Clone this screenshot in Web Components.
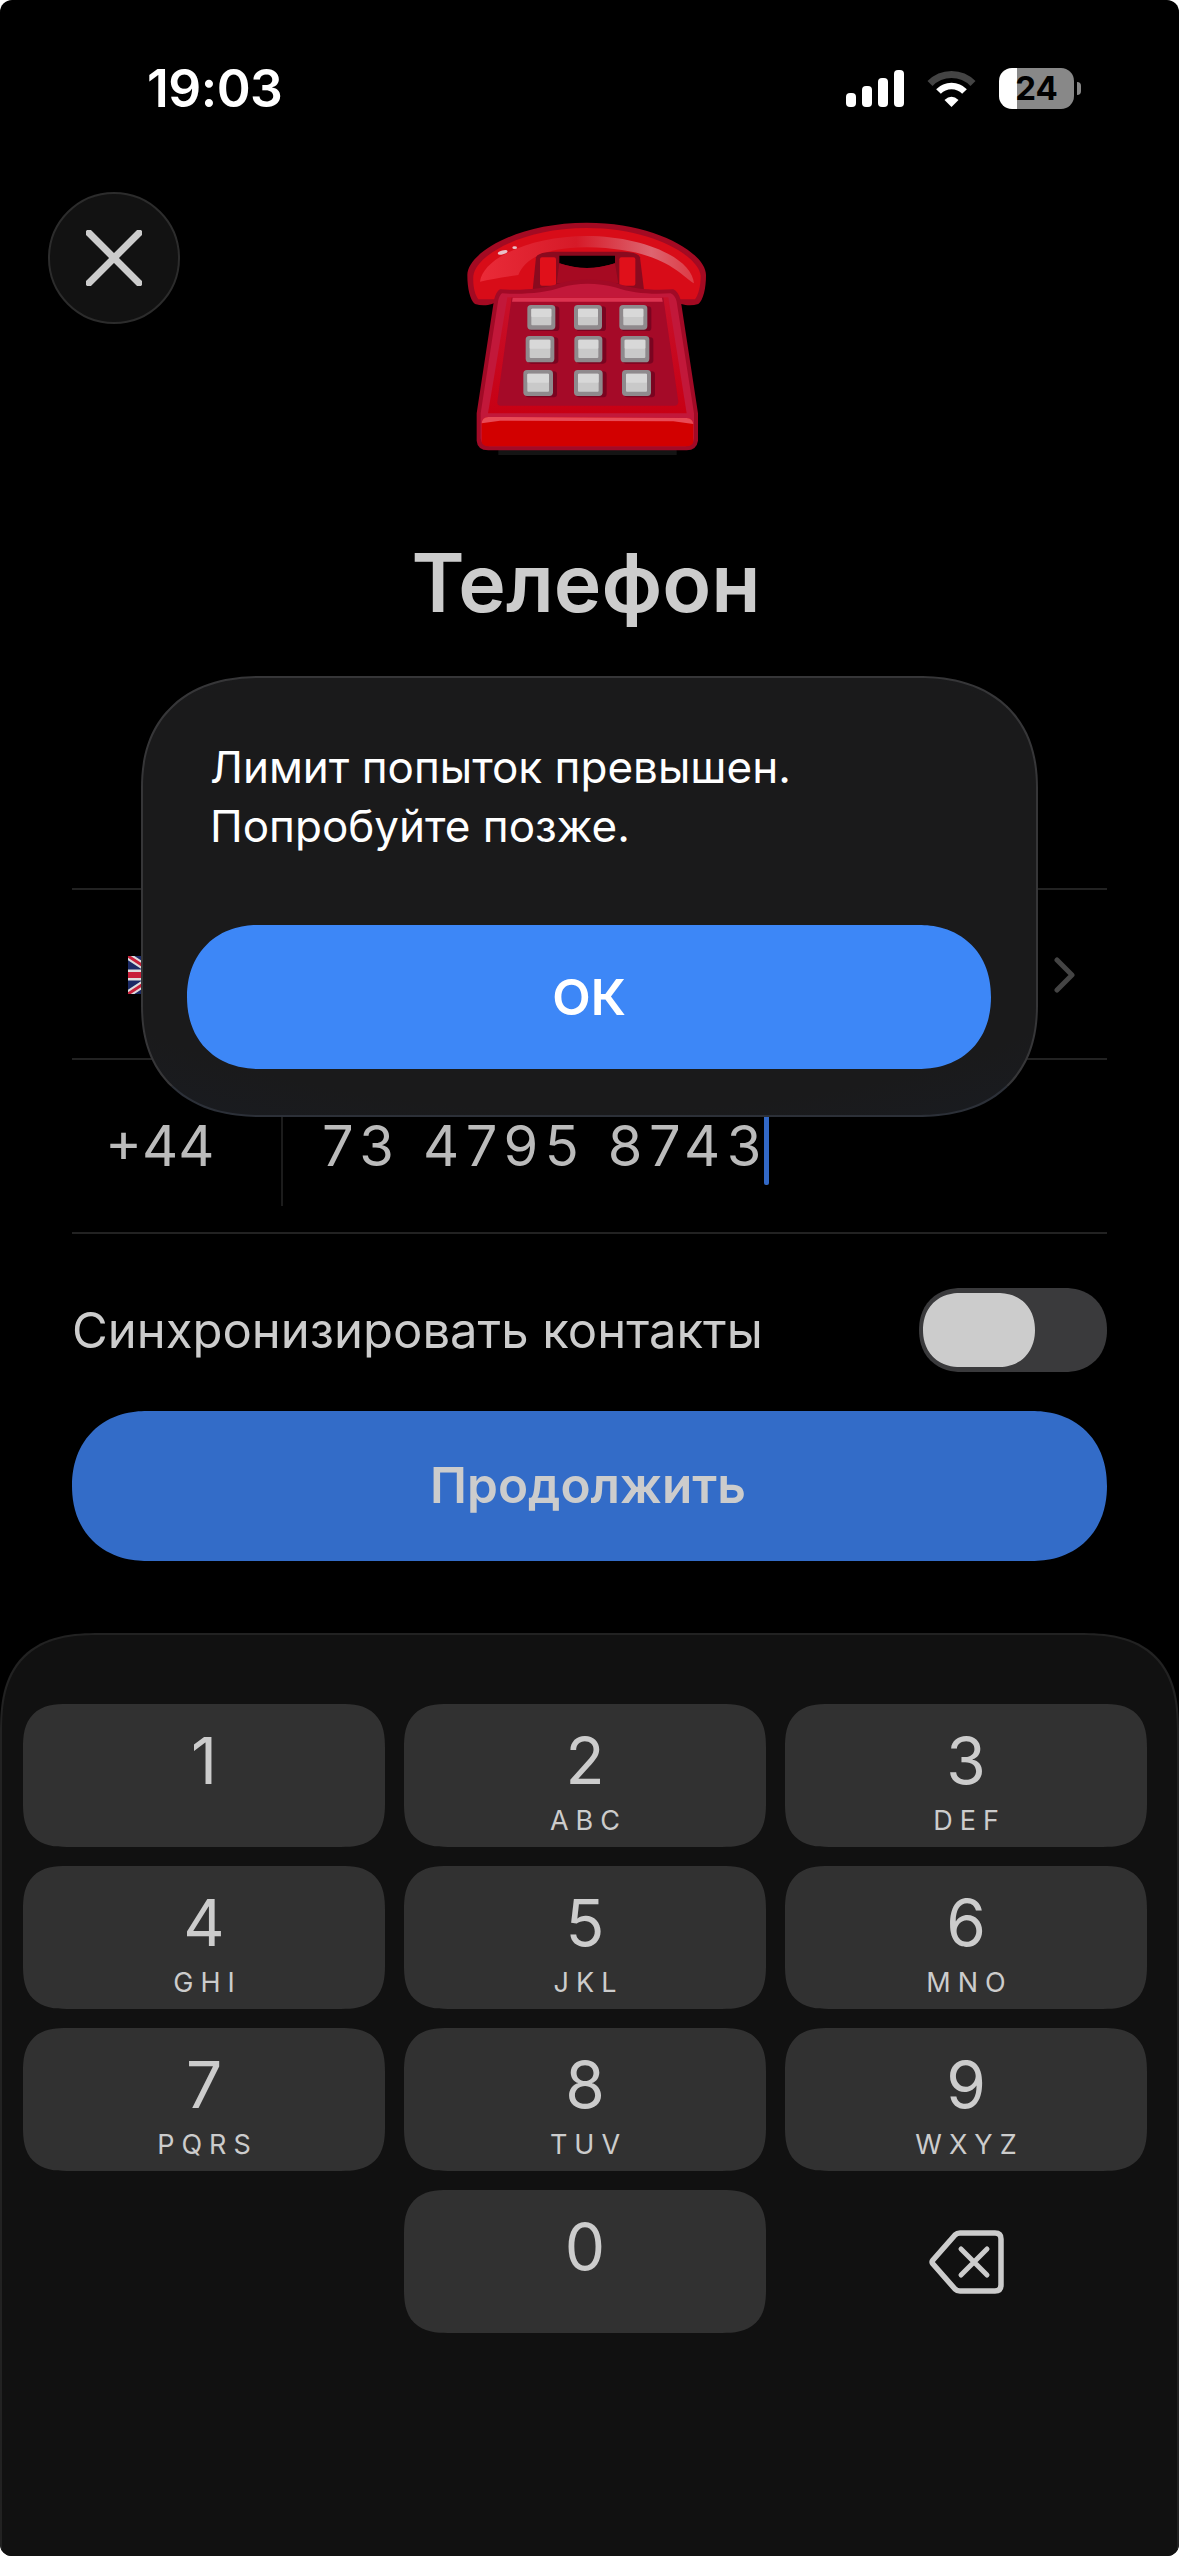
<!DOCTYPE html>
<html lang="ru">
<head>
<meta charset="utf-8">
<title>Телефон</title>
<style>
  html, body { margin: 0; background: #fff; }
  body { width: 1179px; height: 2556px; font-family: Inter, "Liberation Sans", sans-serif; }
</style>
</head>
<body>
<app-screen>
  <status-bar></status-bar>
  <phone-hero></phone-hero>
  <country-row></country-row>
  <phone-field></phone-field>
  <sync-row>Синхронизировать контакты</sync-row>
  <primary-button>Продолжить</primary-button>
  <num-pad></num-pad>
  <alert-dialog>Лимит попыток превышен.<br>Попробуйте позже.</alert-dialog>
</app-screen>

<script>
class AppScreen extends HTMLElement {
  constructor() {
    super();
    this.attachShadow({ mode: 'open' });
    this.shadowRoot.innerHTML = `
      <style>
        :host {
          display: flex;
          flex-direction: column;
          position: relative;
          width: 1179px;
          height: 2556px;
          overflow: hidden;
          background: #000;
          border-radius: 12px;
          color: #ccc;
        }
      </style>
      <slot></slot>`;
  }
}

class StatusBar extends HTMLElement {
  constructor() {
    super();
    this.attachShadow({ mode: 'open' });
    this.shadowRoot.innerHTML = `
      <style>
        :host {
          display: flex;
          justify-content: space-between;
          align-items: center;
          box-sizing: border-box;
          height: 192px;
          padding: 0 98px 16px 147px;
          flex: none;
        }
        .time { font-size: 51.500px; font-weight: 600; color: #fff; line-height: 60px; letter-spacing: -0.5px; }
        .icons { display: flex; align-items: center; gap: 23px; }
        svg { display: block; }
        .battery {
          position: relative;
          width: 75px;
          height: 41px;
          margin-right: 7px;
          border-radius: 13px;
          background: linear-gradient(90deg, #fff 18px, #888 18px);
          color: #000;
          font-size: 33px;
          font-weight: 700;
          line-height: 41px;
          text-align: center;
        }
        .battery::after {
          content: "";
          position: absolute;
          left: 78px;
          top: 14px;
          width: 4px;
          height: 13px;
          background: #888;
          border-radius: 0 6px 6px 0;
        }
      </style>
      <div class="time">19:03</div>
      <div class="icons">
        <svg width="58" height="37" viewBox="0 0 58 37" fill="#fff">
          <rect x="0" y="23" width="10" height="14" rx="4"/>
          <rect x="16" y="16" width="10" height="21" rx="4"/>
          <rect x="32" y="8" width="10" height="29" rx="4"/>
          <rect x="48" y="0" width="10" height="37" rx="4"/>
        </svg>
        <svg width="49" height="37" viewBox="0 0 49 37" fill="none">
          <path d="M3 13.500 A30 30 0 0 1 46 13.500" stroke="#444" stroke-width="7"/>
          <path d="M11.500 21.500 A18 18 0 0 1 37.500 21.500" stroke="#fff" stroke-width="6.500"/>
          <path d="M17.500 30 Q24.500 23.500 31.500 30 L24.500 37 Z" fill="#fff"/>
        </svg>
        <div class="battery">24</div>
      </div>`;
  }
}

class PhoneHero extends HTMLElement {
  constructor() {
    super();
    this.attachShadow({ mode: 'open' });
    const btnRows = [
      [[322, 315, 84, 74], [462, 315, 84, 74], [598, 315, 84, 74]],
      [[317, 408, 86, 79], [463, 408, 84, 79], [602, 408, 86, 79]],
      [[310, 510, 89, 78], [462, 510, 86, 78], [606, 510, 87, 78]],
    ];
    const btns = btnRows.flat().map(([x, y, w, h]) => `
      <rect x="${x + 6}" y="${y + 4}" width="${w + 6}" height="${h}" rx="10" fill="#7a0420"/>
      <rect x="${x}" y="${y}" width="${w}" height="${h}" rx="11" fill="#8f8a8d"/>
      <rect x="${x + 12}" y="${y + 11}" width="${w - 24}" height="${h - 24}" rx="3" fill="#c9c9c9"/>
      <rect x="${x + 12}" y="${y + 11}" width="${w - 24}" height="${(h - 24) / 2}" rx="3" fill="#d8d8d8"/>`).join('');
    this.shadowRoot.innerHTML = `
      <style>
        :host { display: block; flex: none; height: 696px; box-sizing: border-box; }
        .top {
          display: grid;
          grid-template-columns: 372px 340px;
          padding-left: 48px;
          align-items: start;
        }
        .close {
          width: 132px;
          height: 132px;
          box-sizing: border-box;
          border: 2px solid #2c2c2c;
          border-radius: 50%;
          background: #121212;
          display: flex;
          align-items: center;
          justify-content: center;
        }
        .phone { display: block; margin-top: 8px; }
        h1 {
          margin: 54px 0 0;
          padding-right: 7px;
          text-align: center;
          font-size: 80.500px;
          font-weight: 600;
          line-height: 98px;
          color: #ccc;
        }
      </style>
      <div class="top">
        <div class="close">
          <svg width="56" height="56" viewBox="0 0 56 56">
            <path d="M3 3 L53 53 M53 3 L3 53" stroke="#ccc" stroke-width="7" stroke-linecap="round"/>
          </svg>
        </div>
        <svg class="phone" width="340" height="280" viewBox="0 0 1020 840">
          <defs>
            <linearGradient id="shine" x1="0" y1="0" x2="1" y2="0">
              <stop offset="0" stop-color="#ea2b38"/>
              <stop offset=".45" stop-color="#d61a28"/>
              <stop offset=".8" stop-color="#dd6570"/>
              <stop offset="1" stop-color="#dd3a44"/>
            </linearGradient>
            <linearGradient id="body" x1="0" y1="0" x2="0" y2="1">
              <stop offset="0" stop-color="#c7102a"/>
              <stop offset="1" stop-color="#c80014"/>
            </linearGradient>
          </defs>
          <rect x="235" y="745" width="535" height="20" fill="#141414"/>
          <path d="M142 225 C142 160 290 68 500 68 C710 68 858 160 858 225 C858 265 850 300 835 312 C810 320 780 316 765 300 L235 300 C220 316 190 320 165 312 C150 300 142 265 142 225 Z" fill="#a30a22"/>
          <path d="M160 228 C165 170 300 84 500 84 C700 84 838 170 842 228 C842 260 835 285 825 298 L175 298 C165 285 158 260 160 228 Z" fill="#d80c18"/>
          <path d="M180 245 C190 170 340 108 500 108 C660 108 815 170 822 250 C780 225 730 145 500 142 C350 142 310 190 295 225 C250 232 210 238 180 245 Z" fill="url(#shine)"/>
          <path d="M338 270 L348 172 Q352 157 400 155 L610 155 Q656 157 660 172 L672 270 Z" fill="#8a0a1e"/>
          <path d="M418 167 L585 167 L585 190 Q500 218 418 190 Z" fill="#000"/>
          <path d="M418 190 Q500 218 585 190 L595 250 L410 250 Z" fill="#a60a22"/>
          <rect x="360" y="172" width="48" height="85" rx="6" fill="#e0101a"/>
          <rect x="598" y="172" width="48" height="85" rx="6" fill="#e0101a"/>
          <ellipse cx="248" cy="157" rx="15" ry="6" fill="#e8c0c8" transform="rotate(-15 248 157)"/>
          <ellipse cx="284" cy="143" rx="7" ry="4" fill="#e8c0c8"/>
          <path d="M240 268 C300 272 370 268 420 250 C470 235 540 235 590 250 C640 268 700 272 760 268 Q775 275 782 300 L834 640 L834 722 Q830 750 800 751 L205 751 Q172 750 170 722 L170 640 L222 300 Q228 275 240 268 Z" fill="#a10a26"/>
          <path d="M246 280 C305 284 375 280 425 262 C470 248 535 248 585 262 C635 280 695 284 752 280 Q765 285 770 305 L822 640 L822 715 Q820 738 795 739 L210 739 Q184 738 182 715 L182 640 L234 305 Q238 285 246 280 Z" fill="#c2183a"/>
          <path d="M262 292 L745 292 L800 640 L204 640 Z" fill="url(#body)"/>
          <path d="M275 293 L730 293 L775 605 Q775 615 765 617 L240 617 Q230 615 232 605 Z" fill="#a50a28"/>
          <path d="M278 293 L726 293 L728 305 L276 305 Z" fill="#dc3350"/>
          ${btns}
          <path d="M185 670 Q186 652 205 651 L800 654 Q818 656 820 672 L820 725 Q818 738 800 739 L205 739 Q187 738 185 725 Z" fill="#d20000"/>
          <path d="M185 670 Q186 652 205 651 L800 654 Q818 656 820 672 L760 664 L240 662 Z" fill="#e84a56"/>
        </svg>
      </div>
      <h1>Телефон</h1>`;
  }
}

class CountryRow extends HTMLElement {
  constructor() {
    super();
    this.attachShadow({ mode: 'open' });
    this.shadowRoot.innerHTML = `
      <style>
        :host {
          display: flex;
          flex: none;
          align-items: center;
          justify-content: space-between;
          box-sizing: border-box;
          height: 170px;
          margin: 0 72px;
          padding: 2px 32px 0 56px;
          border-top: 2px solid #222;
        }
      </style>
      <svg width="58" height="38" viewBox="0 0 58 38">
        <rect width="58" height="38" rx="4" fill="#1b2a66"/>
        <path d="M0 0 L58 38 M58 0 L0 38" stroke="#ddd" stroke-width="7"/>
        <path d="M0 0 L58 38 M58 0 L0 38" stroke="#c8203a" stroke-width="3"/>
        <path d="M29 0 V38 M0 19 H58" stroke="#ddd" stroke-width="11"/>
        <path d="M29 0 V38 M0 19 H58" stroke="#c8203a" stroke-width="6"/>
      </svg>
      <svg width="21" height="36" viewBox="0 0 21 36" fill="none">
        <path d="M3 3 L18 18 L3 33" stroke="#444" stroke-width="5" stroke-linecap="round" stroke-linejoin="round"/>
      </svg>`;
  }
}

class PhoneField extends HTMLElement {
  constructor() {
    super();
    this.attachShadow({ mode: 'open' });
    this.shadowRoot.innerHTML = `
      <style>
        :host {
          display: flex;
          flex: none;
          box-sizing: border-box;
          height: 176px;
          margin: 0 72px;
          border-top: 2px solid #222;
          border-bottom: 2px solid #222;
          font-size: 56px;
          font-weight: 400;
          color: #bbb;
        }
        .prefix {
          box-sizing: border-box;
          width: 211px;
          height: 146px;
          padding: 47px 0 0 33px;
          border-right: 2px solid #1c1c1c;
          line-height: 78px;
        }
        .number {
          display: flex;
          align-items: flex-start;
          padding: 47px 0 0 39px;
          line-height: 78px;
          letter-spacing: 6.600px;
        }
        .caret {
          width: 5px;
          height: 78px;
          margin-left: -4px;
          background: #3268c6;
          border-radius: 2px;
        }
      </style>
      <div class="prefix">+44</div>
      <div class="number"><span>73 4795 8743</span><div class="caret"></div></div>`;
  }
}

class SyncRow extends HTMLElement {
  constructor() {
    super();
    this.attachShadow({ mode: 'open' });
    this.shadowRoot.innerHTML = `
      <style>
        :host {
          display: flex;
          flex: none;
          align-items: center;
          justify-content: space-between;
          height: 84px;
          margin: 54px 72px 0;
          font-size: 49px;
          color: #ccc;
        }
        .track {
          box-sizing: border-box;
          width: 188px;
          height: 84px;
          padding: 5px 4px;
          border-radius: 42px;
          corner-shape: superellipse(1.12);
          background: #3a3a3c;
        }
        .knob { width: 112px; height: 74px; border-radius: 37px; corner-shape: superellipse(1.12); background: #ccc; }
      </style>
      <div class="label"><slot></slot></div>
      <div class="track"><div class="knob"></div></div>`;
  }
}

class PrimaryButton extends HTMLElement {
  constructor() {
    super();
    this.attachShadow({ mode: 'open' });
    this.shadowRoot.innerHTML = `
      <style>
        :host {
          display: flex;
          flex: none;
          align-items: center;
          justify-content: center;
          box-sizing: border-box;
          height: 150px;
          margin: 39px 72px 0;
          padding: 0 3px 2px 0;
          border-radius: 75px;
          corner-shape: superellipse(1.12);
          background: #336cc8;
          font-size: 49.500px;
          font-weight: 600;
          color: #ccc;
        }
      </style>
      <slot></slot>`;
  }
}

class NumKey extends HTMLElement {
  constructor() {
    super();
    this.attachShadow({ mode: 'open' });
    const digit = this.getAttribute('digit');
    const letters = this.getAttribute('letters') || '';
    this.shadowRoot.innerHTML = `
      <style>
        :host {
          display: flex;
          flex-direction: column;
          align-items: center;
          box-sizing: border-box;
          padding-top: 22px;
          border-radius: 44px;
          corner-shape: superellipse(1.4);
          background: #313131;
          color: #ccc;
        }
        .digit { font-size: 64px; line-height: 70px; }
        .letters { margin-top: 9px; font-size: 27px; line-height: 32px; letter-spacing: 7px; padding-left: 7px; }
      </style>
      <div class="digit">${digit}</div>
      <div class="letters">${letters}</div>`;
  }
}

class NumPad extends HTMLElement {
  constructor() {
    super();
    this.attachShadow({ mode: 'open' });
    const keys = [['1', ''], ['2', 'ABC'], ['3', 'DEF'], ['4', 'GHI'], ['5', 'JKL'], ['6', 'MNO'], ['7', 'PQRS'], ['8', 'TUV'], ['9', 'WXYZ']];
    this.shadowRoot.innerHTML = `
      <style>
        :host {
          display: grid;
          flex: 1;
          grid-template-columns: repeat(3, 362px);
          grid-auto-rows: 143px;
          gap: 19px;
          align-content: start;
          box-sizing: border-box;
          margin-top: 72px;
          padding: 69px 0 0 21px;
          border: 2px solid #222;
          border-bottom: 0;
          border-radius: 100px 100px 0 0;
          corner-shape: superellipse(1.4);
          background: #111;
        }
        .back { display: flex; align-items: center; justify-content: center; padding-left: 2px; }
      </style>
      ${keys.map(([d, l]) => `<num-key digit="${d}" letters="${l}"></num-key>`).join('')}
      <div></div>
      <num-key digit="0"></num-key>
      <div class="back">
        <svg width="76" height="64" viewBox="0 0 76 64" fill="none" stroke="#ccc" stroke-linecap="round" stroke-linejoin="round">
          <path d="M31 3 H66 Q72 3 72 9 V55 Q72 61 66 61 H31 Q28 61 26 59 L4 34 Q2 32 4 30 L26 5 Q28 3 31 3 Z" stroke-width="5.500"/>
          <path d="M32 19 L58 45 M58 19 L32 45" stroke-width="5"/>
        </svg>
      </div>`;
  }
}

class AlertDialog extends HTMLElement {
  constructor() {
    super();
    this.attachShadow({ mode: 'open' });
    this.shadowRoot.innerHTML = `
      <style>
        :host {
          position: absolute;
          left: 141px;
          top: 676px;
          width: 897px;
          height: 441px;
          box-sizing: border-box;
          display: flex;
          flex-direction: column;
          padding: 60px 45px 0 44px;
          border: 2px solid #363638;
          border-bottom-color: #2c3038;
          border-radius: 120px / 112px;
          corner-shape: superellipse(1.2);
          background:
            radial-gradient(110% 90% at 50% 45%, rgba(26, 26, 27, 1) 60%, rgba(24, 30, 42, 1)),
            #1a1a1b;
          color: #fff;
        }
        .msg { flex: none; height: 187px; padding-left: 23px; font-size: 44px; line-height: 59px; }
        .ok {
          display: flex;
          align-items: center;
          justify-content: center;
          height: 144px;
          border-radius: 72px;
          corner-shape: superellipse(1.12);
          background: #3d87f7;
          font-size: 50px;
          font-weight: 600;
          color: #fff;
        }
      </style>
      <div class="msg"><slot></slot></div>
      <div class="ok">ОК</div>`;
  }
}

customElements.define('app-screen', AppScreen);
customElements.define('status-bar', StatusBar);
customElements.define('phone-hero', PhoneHero);
customElements.define('country-row', CountryRow);
customElements.define('phone-field', PhoneField);
customElements.define('sync-row', SyncRow);
customElements.define('primary-button', PrimaryButton);
customElements.define('num-key', NumKey);
customElements.define('num-pad', NumPad);
customElements.define('alert-dialog', AlertDialog);
</script>
</body>
</html>
